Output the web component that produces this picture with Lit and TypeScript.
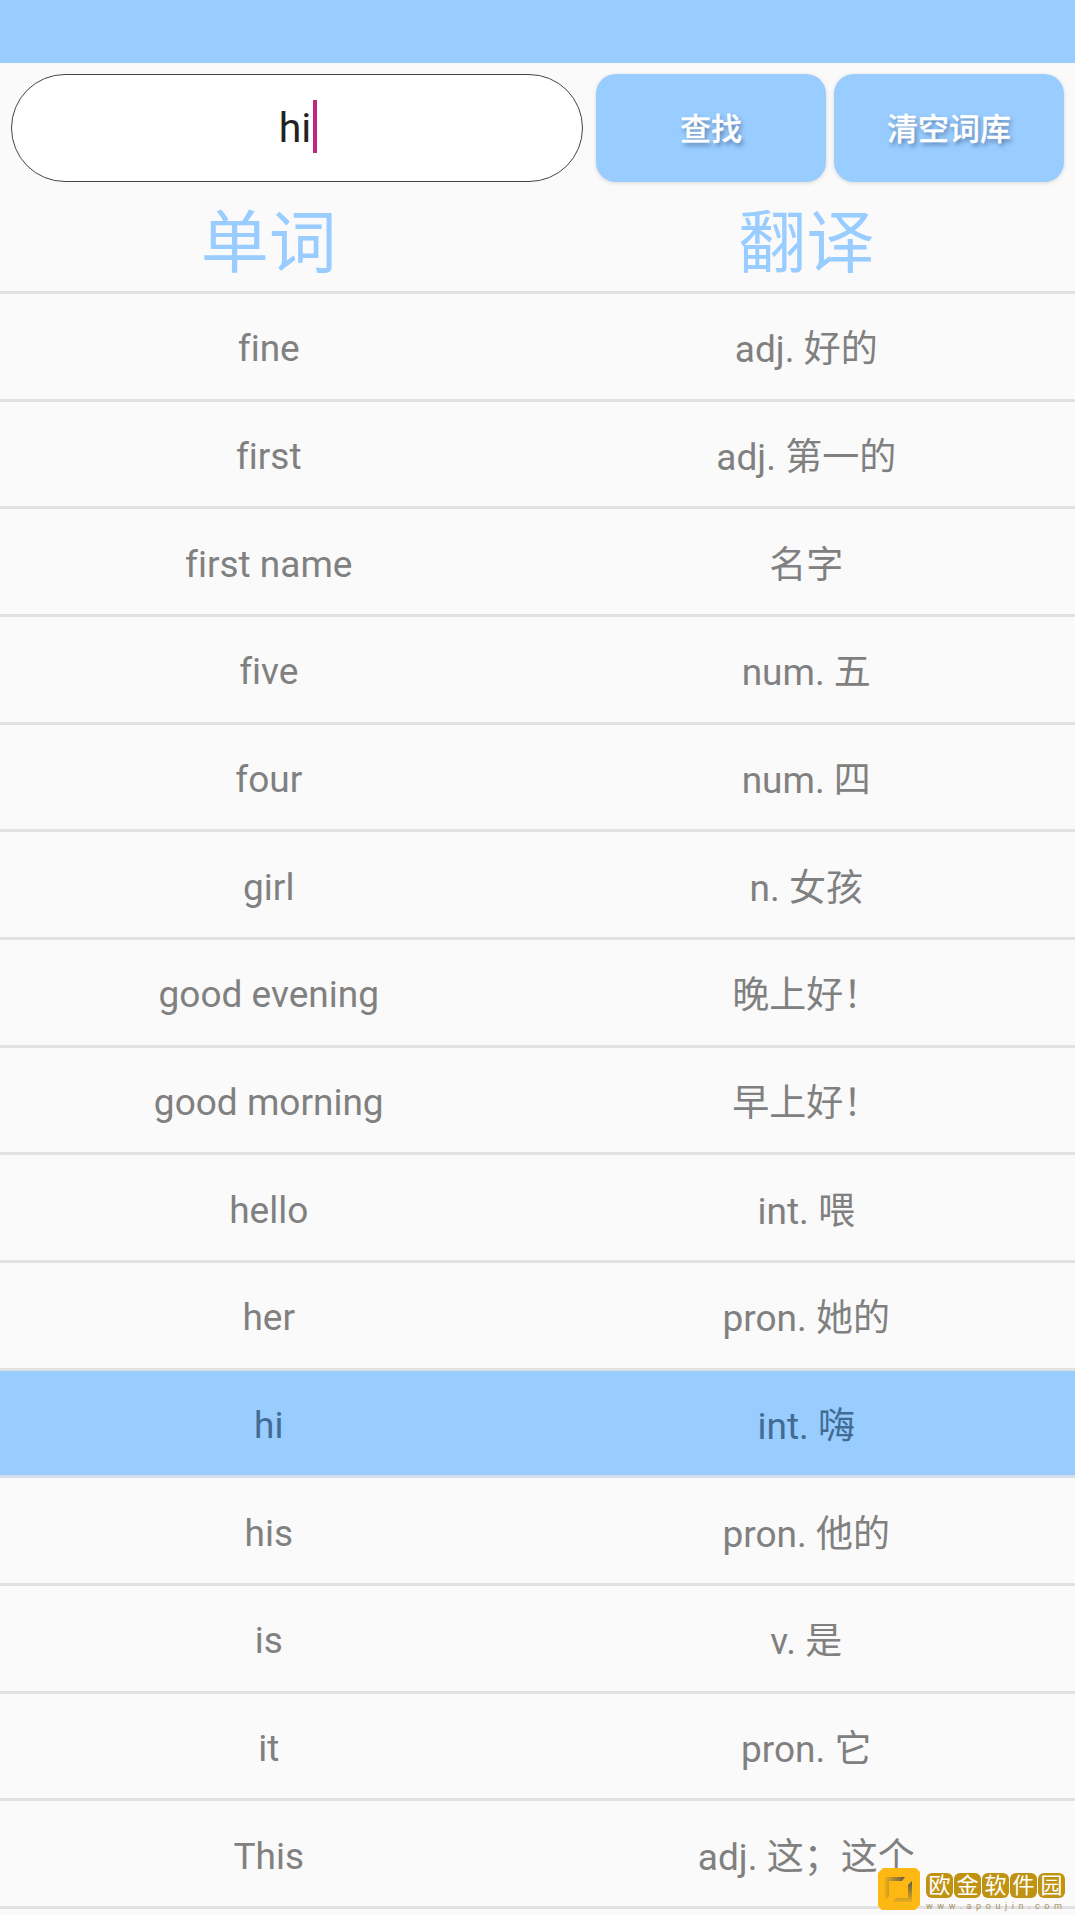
import { LitElement, html, css, svg } from "lit";
import { customElement } from "lit/decorators.js";

const ROWS: [string, string][] = [
  ["fine", "adj. 好的"],
  ["first", "adj. 第一的"],
  ["first name", "名字"],
  ["five", "num. 五"],
  ["four", "num. 四"],
  ["girl", "n. 女孩"],
  ["good evening", "晚上好！"],
  ["good morning", "早上好！"],
  ["hello", "int. 喂"],
  ["her", "pron. 她的"],
  ["hi", "int. 嗨"],
  ["his", "pron. 他的"],
  ["is", "v. 是"],
  ["it", "pron. 它"],
  ["This", "adj. 这；这个"],
];

@customElement("app-root")
export class AppRoot extends LitElement {
  static styles = css`
    :host {
      display: block;
      position: relative;
      width: 1075px;
      height: 1915px;
      overflow: hidden;
      background: #fafafa;
      font-family: Roboto, "Noto Sans CJK SC", sans-serif;
      font-variant-ligatures: none;
    }
    .bar { height: 63px; background: #99ccff; }
    .tools {
      display: flex;
      padding: 11px 11px 0 11px;
      height: 108px;
    }
    .search {
      flex: none;
      width: 572px;
      height: 108px;
      box-sizing: border-box;
      border: 1.5px solid #444;
      border-radius: 54px;
      background: #fff;
      display: flex;
      align-items: center;
      justify-content: center;
      padding-left: 2px;
      font-size: 41px;
      color: #222;
    }
    .caret {
      display: inline-block;
      width: 4px;
      height: 53px;
      background: #c2267e;
      margin: -3px 0 0 2px;
    }
    .btn {
      flex: none;
      width: 230px;
      height: 108px;
      margin-left: 8px;
      border-radius: 20px;
      background: #99ccff;
      box-shadow: 0 1px 4px rgba(0, 0, 0, 0.14);
      color: #fff;
      font-size: 31px;
      font-weight: 500;
      -webkit-text-stroke: 0.3px #fff;
      text-shadow: 2px 3px 4px rgba(40, 70, 110, 0.55);
      display: flex;
      align-items: center;
      justify-content: center;
      padding-bottom: 4px;
      box-sizing: border-box;
    }
    .btn.first { margin-left: 13px; }
    .row {
      display: grid;
      grid-template-columns: 1fr 1fr;
      align-items: center;
      text-align: center;
      height: 107.67px;
      box-sizing: border-box;
      border-bottom: 3px solid #e1e1e1;
      font-size: 37px;
      color: #808080;
    }
    .word { padding-top: 5px; }
    .head {
      height: 112px;
      padding-top: 2px;
      font-size: 68px;
      color: #99ccff;
    }
    .row.hit { background: #99ccff; color: #426c94; border-bottom-color: #d5deea; }
    .logo {
      position: absolute;
      left: 878px;
      top: 1868px;
      width: 190px;
      height: 46px;
      display: flex;
      gap: 6px;
    }
    .logo svg { flex: none; }
    .brand { display: flex; flex-direction: column; }
    .tiles { display: flex; gap: 1px; margin-top: 5px; }
    .tile {
      width: 27px;
      height: 25px;
      border-radius: 6px;
      background: #bf9211;
      color: #fff;
      font-size: 22px;
      line-height: 25px;
      text-align: center;
    }
    .url {
      font-size: 9px;
      line-height: 12px;
      margin-top: 2px;
      color: #a39062;
      letter-spacing: 4.6px;
      white-space: nowrap;
    }
  `;

  private logoIcon() {
    return svg`<svg width="42" height="42" viewBox="0 0 42 42">
      <defs>
        <linearGradient id="g1" x1="0" y1="0" x2="1" y2="0">
          <stop offset="0" stop-color="#e8ae1c"/><stop offset="1" stop-color="#5f5a48"/>
        </linearGradient>
        <linearGradient id="g2" x1="0" y1="1" x2="0" y2="0">
          <stop offset="0" stop-color="#e8ae1c"/><stop offset="1" stop-color="#5f5a48"/>
        </linearGradient>
      </defs>
      <path d="M5 0 H38 L42 4 V37 L37 42 H4 L0 38 V5Z" fill="#fdb813"/>
      <path d="M7 9 H27 L24 13 H11 V28 L7 32Z" fill="url(#g1)"/>
      <path d="M34 13 V34 H14 L18 30 H30 V17Z" fill="url(#g2)"/>
      <path d="M15 17 H26 V26 H15Z" fill="#fdb813"/>
    </svg>`;
  }

  render() {
    return html`
      <div class="bar"></div>
      <div class="tools">
        <div class="search">hi<span class="caret"></span></div>
        <div class="btn first">查找</div>
        <div class="btn">清空词库</div>
      </div>
      <div class="row head"><div>单词</div><div>翻译</div></div>
      ${ROWS.map(
        ([w, t]) => html`<div class="row ${w === "hi" ? "hit" : ""}"><div class="word">${w}</div><div>${t}</div></div>`
      )}
      <div class="logo">
        ${this.logoIcon()}
        <div class="brand">
          <div class="tiles">
            ${["欧", "金", "软", "件", "园"].map((c) => html`<div class="tile">${c}</div>`)}
          </div>
          <div class="url">www.apoujin.com</div>
        </div>
      </div>
    `;
  }
}
